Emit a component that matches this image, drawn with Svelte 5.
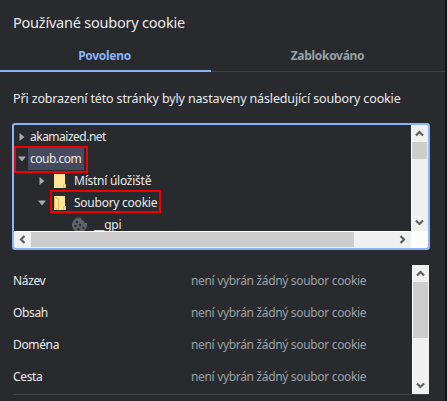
<script>
  const fields = ['Název', 'Obsah', 'Doména', 'Cesta'];
</script>

{#snippet arrow(dir)}
  <svg class="arrow" width="17" height="17" viewBox="0 0 17 17">
    <g transform="rotate({dir} 8.5 8.5)"><path d="M5 10.5 L8.5 7 L12 10.5" fill="none" stroke="#606060" stroke-width="2.2" /></g>
  </svg>
{/snippet}

{#snippet folder(open)}
  <svg class="folder" width="12" height="14" viewBox="0 0 12 14">
    <path d="M0 0H11V10H12V14H0Z" fill="#ffe596" />
    <path d="M9.5 13.5V10.5H11.5V13.5Z" fill="#ffe596" stroke="#e8c365" />
    {#if open}<path d="M.5 .5L4.5 3V13.5L.5 12Z" fill="#ffe9a2" stroke="#e5bc59" />{/if}
  </svg>
{/snippet}

{#snippet twisty(open)}
  <svg class="twisty" width="8" height="8" viewBox="0 0 8 8">
    <path d={open ? 'M0 1.5H8L4 6.5Z' : 'M1.5 0L6.5 4L1.5 8Z'} fill="#a9aaac" />
  </svg>
{/snippet}

<main>
  <h1>Používané soubory cookie</h1>
  <nav>
    <div class="tab active"><span>Povoleno</span></div>
    <div class="tab"><span>Zablokováno</span></div>
  </nav>
  <p>Při zobrazení této stránky byly nastaveny následující soubory cookie</p>

  <section class="tree">
    <div class="rows">
      <div class="row">{@render twisty(false)}<span class="t1">akamaized.net</span></div>
      <div class="row">{@render twisty(true)}<span class="sel">coub.com</span><i class="mark m1"></i></div>
      <div class="row l2">{@render twisty(false)}{@render folder(false)}<span class="t3">Místní úložiště</span></div>
      <div class="row l2">{@render twisty(true)}{@render folder(true)}<span class="t4">Soubory cookie</span><i class="mark m2"></i></div>
      <div class="row l3">
        <svg width="16" height="16" viewBox="0 0 16 16">
          <path d="M7 .5C8 .3 8.6 .4 9 1L9.5 3L11.5 3.5L12 5.5L15 6C16 11 12 15.5 8 15.5A7.5 7.5 0 0 1 7 .5Z" fill="#5f6368" />
          <g fill="#292a2d"><circle cx="5" cy="5" r="1.2" /><circle cx="3.5" cy="9" r="1.2" /><circle cx="8" cy="8" r="1.2" /><circle cx="6.5" cy="12.3" r="1.2" /><circle cx="11.5" cy="11" r="1.2" /></g>
        </svg>
        <span class="t5">__gpi</span>
      </div>
    </div>
    <div class="vbar">{@render arrow(0)}<b></b><s></s>{@render arrow(180)}</div>
    <div class="hbar">{@render arrow(-90)}<b></b><s></s>{@render arrow(90)}</div>
    <div class="corner"></div>
  </section>

  <section class="details">
    <dl>
      {#each fields as field}
        <div><dt>{field}</dt><dd>není vybrán žádný soubor cookie</dd></div>
      {/each}
    </dl>
    <div class="vbar">{@render arrow(0)}<b></b><s></s>{@render arrow(180)}</div>
  </section>
</main>

<style>
  :global(body) { background: #292a2d; overflow: hidden; }
  * { box-sizing: border-box; }
  main { width: 447px; height: 401px; background: #292a2d; border-right: 2px solid #111214; color: #e8eaed; font: 12px/22px "Noto Sans", "Open Sans", sans-serif; overflow: hidden; white-space: nowrap; }
  h1 { margin: 0; padding: 11px 0 0 13px; height: 43px; font-size: 14.5px; line-height: 22px; font-weight: 400; letter-spacing: -.22px; }
  nav { display: flex; height: 29px; }
  .tab { flex: 1; text-align: center; color: #9aa0a6; font-weight: 700; font-size: 12px; line-height: 26px; border-bottom: 1px solid #414246; letter-spacing: -.3px; }
  .tab.active { flex: 0 0 211px; color: #8ab4f8; border-bottom: 2px solid #8ab4f8; }
  .tab.active span { margin-left: -2px; }
  .tab:not(.active) { padding-right: 1px; }
  p { margin: 0; padding: 16px 0 0 13px; height: 51px; font-size: 12.5px; line-height: 22px; letter-spacing: -.14px; }
  .tree { display: grid; grid-template: 106px 17px / 397px 17px; width: 418px; height: 127px; margin-left: 12px; border: 2px solid #8ab4f8; border-radius: 3px; overflow: hidden; }
  .rows { overflow: hidden; padding-top: 1px; }
  .row { display: flex; align-items: center; height: 22px; padding-left: 4px; position: relative; }
  .row span { letter-spacing: -.25px; padding: 0 2px; height: 22px; }
  .row .t1 { letter-spacing: -.5px; }
  .twisty { margin-right: 2px; flex: none; }
  .l2 { padding-left: 24px; }
  .l2 .twisty { margin-right: 8px; }
  .l2 span { margin-left: 6px; }
  .l3 { padding-left: 58px; }
  .l3 span { margin-left: 4px; }
  .row .sel { width: 56px; background: #454b5e; letter-spacing: -.5px; }
  .mark { position: absolute; border: 2px solid #f00000; }
  .m1 { left: 0; top: -2px; width: 74px; height: 27px; }
  .m2 { left: 36px; top: -2px; width: 111px; height: 23px; }
  .vbar, .hbar { background: #f0f0f0; display: flex; }
  .vbar { flex-direction: column; width: 17px; border-left: 1px solid #fff; }
  .hbar { border-top: 1px solid #fff; }
  .arrow { flex: none; display: block; }
  .vbar .arrow { margin-left: -1px; }
  .hbar .arrow { margin-top: -1px; }
  .vbar b { background: #cdcdcd; height: 17px; width: 15px; }
  .hbar b { background: #cdcdcd; height: 15px; width: 323px; }
  s { flex: 1; }
  .corner { background: #fff; }
  .details { display: flex; margin: 15px 0 0 13px; width: 416px; height: 130px; border-bottom: 1px solid #414246; }
  dl { margin: 0; flex: 1; }
  dl div { display: flex; height: 32px; line-height: 32px; }
  dt { width: 178px; letter-spacing: -.35px; }
  dd { margin: 0; color: #9aa0a6; letter-spacing: -.33px; }
  .details .vbar { height: 129px; }
  .details b { height: 56px; }
</style>
